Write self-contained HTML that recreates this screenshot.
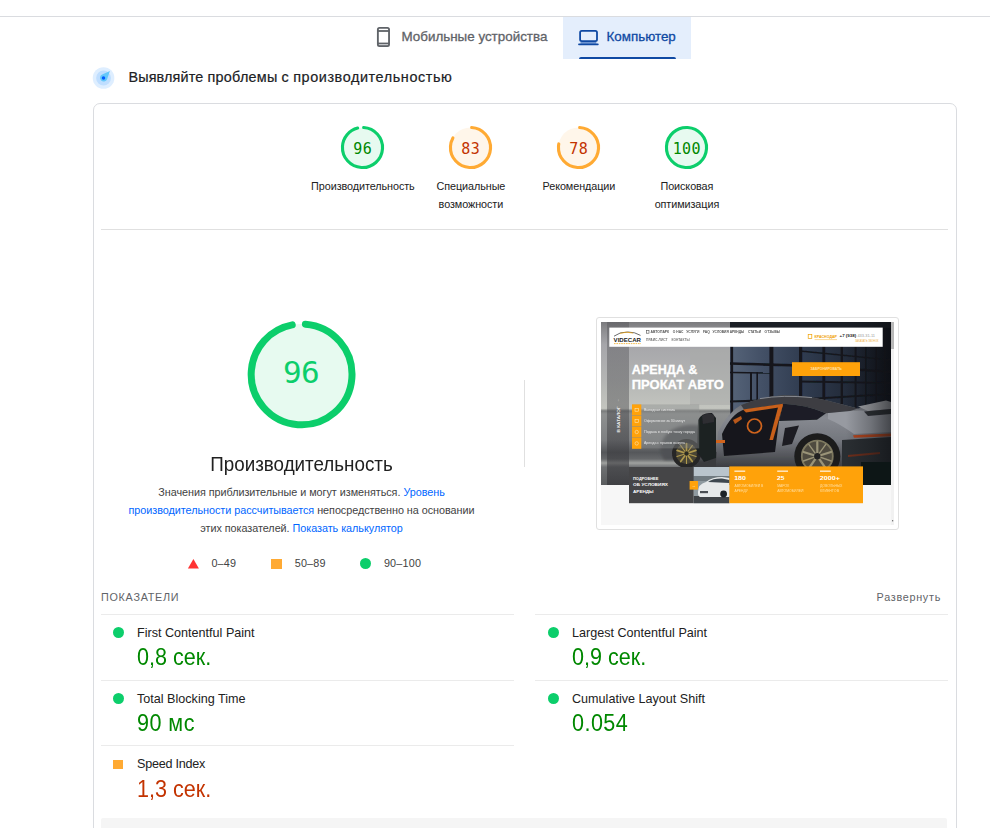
<!DOCTYPE html>
<html lang="ru">
<head>
<meta charset="utf-8">
<title>PageSpeed Insights</title>
<style>
html,body{margin:0;padding:0;}
body{width:990px;height:828px;overflow:hidden;background:#fff;position:relative;
  font-family:"Liberation Sans",Arial,sans-serif;color:#212121;}
.abs{position:absolute;white-space:nowrap;}
.topline{left:0;top:16px;width:990px;height:1px;background:#dadce0;}
.tab{font-size:13.4px;line-height:20px;-webkit-text-stroke:0.3px currentColor;}
.tab1{left:401.5px;top:27px;color:#5f6368;letter-spacing:0px;}
.tabbg{left:563px;top:17px;width:128px;height:42px;background:#e4eefc;}
.tabline{left:579px;top:56.6px;width:96.5px;height:2.4px;background:#0f49a3;border-radius:2.4px 2.4px 0 0;}
.tab2{left:606.5px;top:27px;color:#0f49a3;}
.h2{left:128.5px;word-spacing:-0.3px;top:67px;font-size:14.4px;line-height:20px;color:#202124;letter-spacing:0.31px;-webkit-text-stroke:0.2px currentColor;}
.card{left:93px;top:103px;width:862px;height:760px;border:1px solid #dadce0;border-radius:7px;}
.hr{height:1px;background:#e0e0e0;}
.mhr{height:1px;background:#ebebeb;}
.glabel{margin-left:0.4px;font-size:10.8px;line-height:18px;letter-spacing:-0.07px;color:#212121;text-align:center;width:108px;white-space:normal;}
.gnum{font-family:"DejaVu Sans Mono","Liberation Mono",monospace;letter-spacing:0.4px;font-size:15px;line-height:20px;text-align:center;width:44px;}
.title{left:151px;width:301px;top:451.6px;text-align:center;font-size:20px;line-height:24px;transform:scaleX(0.94);transform-origin:50% 50%;color:#212121;}
.desc{letter-spacing:-0.03px;left:121px;width:361px;top:483px;text-align:center;font-size:10.8px;line-height:18px;color:#424242;white-space:normal;}
.desc a{color:#0066ff;text-decoration:none;}
.legend{letter-spacing:0.2px;font-size:10.8px;line-height:14px;color:#424242;top:556px;}
.sect{font-size:10.8px;line-height:14px;color:#5f6368;top:590px;}
.mtitle{font-size:12.6px;line-height:16px;color:#212121;}
.mval{font-size:23.6px;line-height:26px;transform:scaleX(0.914);transform-origin:0 50%;}
.pass{color:#008800;}
.avg{color:#c33300;}
.dot{width:11.4px;height:11.4px;border-radius:50%;background:#0cce6b;}
.sq{width:10.6px;height:9px;background:#ffa400;}
.graybar{left:101px;top:818px;width:846px;height:20px;background:#f5f5f5;border-radius:2px 2px 0 0;}
</style>
</head>
<body>
<div class="abs topline"></div>

<!-- tabs -->
<svg class="abs" style="left:375px;top:26px" width="17" height="22" viewBox="0 0 17 22">
  <rect x="3" y="17.6" width="11" height="2.4" fill="#c4c6c9"/>
  <rect x="2.87" y="1.9" width="11.17" height="18.27" rx="1.6" ry="1.6" fill="none" stroke="#5f6368" stroke-width="1.85"/>
  <rect x="2.8" y="4.1" width="11.3" height="1.8" fill="#5f6368"/>
  <rect x="2.8" y="16.6" width="11.3" height="1.4" fill="#5f6368"/>
</svg>
<div class="abs tab tab1" id="tab1">Мобильные устройства</div>
<div class="abs tabbg"></div>
<div class="abs tabline"></div>
<svg class="abs" style="left:577px;top:29px" width="24" height="18" viewBox="0 0 24 18">
  <rect x="3.5" y="13" width="15.8" height="1.8" fill="#6d94d0"/>
  <rect x="3.1" y="1.8" width="16.9" height="10.3" rx="1.6" fill="none" stroke="#0f49a3" stroke-width="1.8"/>
  <rect x="1.1" y="14.6" width="20.6" height="1.6" rx="0.8" fill="#0f49a3"/>
</svg>
<div class="abs tab tab2" id="tab2">Компьютер</div>

<!-- heading -->
<svg class="abs" style="left:92px;top:66px" width="24" height="24" viewBox="0 0 24 24">
  <circle cx="11.55" cy="12" r="10.8" fill="#deeeff"/>
  <circle cx="11.55" cy="12" r="7.4" fill="#bfdeff"/>
  <path d="M17.9 5 L15.1 13.3 A3.7 3.7 0 1 1 10.2 8.4 Z" fill="#64c8fa"/>
  <circle cx="11.5" cy="11.9" r="1.75" fill="#005aff"/>
</svg>
<div class="abs h2" id="h2"><span style="letter-spacing:0.13px">Выявляйте</span> <span style="letter-spacing:0.27px">проблемы</span> с <span style="letter-spacing:0.6px">производительностью</span></div>

<div class="abs card"></div>

<!-- small gauges -->
<svg class="abs" style="left:338.0px;top:123px" width="49" height="49" viewBox="0 0 49 49">
  <circle cx="24.5" cy="24.5" r="20.05" fill="#e7faf0"/>
  <circle cx="24.5" cy="24.5" r="20.05" fill="none" stroke="#0cce6b" stroke-width="3.1" stroke-linecap="round" stroke-dasharray="119.08 200" transform="rotate(-86.7 24.5 24.5)"/>
</svg>
<div class="abs gnum" id="gn0" style="left:340.5px;top:139.3px;margin-left:0.3px;color:#008800">96</div>
<div class="abs glabel" id="gl0" style="left:308.5px;top:177px">Производительность</div>
<svg class="abs" style="left:446.0px;top:123px" width="49" height="49" viewBox="0 0 49 49">
  <circle cx="24.5" cy="24.5" r="20.05" fill="#fff6ea"/>
  <circle cx="24.5" cy="24.5" r="20.05" fill="none" stroke="#ffaa33" stroke-width="3.1" stroke-linecap="round" stroke-dasharray="102.71 200" transform="rotate(-86.7 24.5 24.5)"/>
</svg>
<div class="abs gnum" id="gn1" style="left:448.5px;top:139.3px;margin-left:0.3px;color:#c33300">83</div>
<div class="abs glabel" id="gl1" style="left:416.5px;top:177px">Специальные возможности</div>
<svg class="abs" style="left:554.0px;top:123px" width="49" height="49" viewBox="0 0 49 49">
  <circle cx="24.5" cy="24.5" r="20.05" fill="#fff6ea"/>
  <circle cx="24.5" cy="24.5" r="20.05" fill="none" stroke="#ffaa33" stroke-width="3.1" stroke-linecap="round" stroke-dasharray="96.41 200" transform="rotate(-86.7 24.5 24.5)"/>
</svg>
<div class="abs gnum" id="gn2" style="left:556.5px;top:139.3px;margin-left:0.3px;color:#c33300">78</div>
<div class="abs glabel" id="gl2" style="left:524.5px;top:177px">Рекомендации</div>
<svg class="abs" style="left:662.0px;top:123px" width="49" height="49" viewBox="0 0 49 49">
  <circle cx="24.5" cy="24.5" r="20.05" fill="#e7faf0"/>
  <circle cx="24.5" cy="24.5" r="20.05" fill="none" stroke="#0cce6b" stroke-width="3.1" stroke-linecap="round" stroke-dasharray="130.98 200" transform="rotate(-86.7 24.5 24.5)"/>
</svg>
<div class="abs gnum" id="gn3" style="left:664.5px;top:139.3px;margin-left:0.3px;color:#008800">100</div>
<div class="abs glabel" id="gl3" style="left:632.5px;top:177px">Поисковая оптимизация</div>

<div class="abs hr" style="left:101px;top:229px;width:847px"></div>

<!-- big gauge -->
<svg class="abs" style="left:241px;top:314px" width="122" height="122" viewBox="0 0 122 122">
  <circle cx="60.6" cy="60.4" r="50.4" fill="#e7faf0"/>
  <circle cx="60.6" cy="60.4" r="50.4" fill="none" stroke="#0cce6b" stroke-width="7" stroke-linecap="round" stroke-dasharray="302.9 400" transform="rotate(-85.7 60.6 60.4)"/>
</svg>
<div class="abs" id="bignum" style="left:251px;width:100px;top:352px;text-align:center;font-family:'DejaVu Sans Mono','Liberation Mono',monospace;font-size:31px;line-height:40px;color:#0cce6b;letter-spacing:-0.6px">96</div>

<div class="abs title" id="title">Производительность</div>
<div class="abs desc" id="desc">Значения приблизительные и могут изменяться. <a>Уровень производительности рассчитывается</a> непосредственно на основании этих показателей. <a>Показать калькулятор</a></div>

<!-- legend -->
<svg class="abs" style="left:187px;top:558px" width="13" height="12" viewBox="0 0 13 12"><path d="M6.4 1 L11.9 10.5 L0.9 10.5 Z" fill="#ff3333"/></svg>
<div class="abs legend" id="lg1" style="left:211.4px">0–49</div>
<div class="abs" style="left:271px;top:558.5px;width:10.8px;height:10px;background:#ffaa33"></div>
<div class="abs legend" id="lg2" style="left:294.7px">50–89</div>
<div class="abs" style="left:360px;top:558px;width:11px;height:11px;border-radius:50%;background:#0cce6b"></div>
<div class="abs legend" id="lg3" style="left:383.9px">90–100</div>

<!-- vertical divider -->
<div class="abs" style="left:524px;top:380px;width:1px;height:87px;background:#e0e0e0"></div>

<!-- screenshot placeholder -->
<div class="abs" id="shot" style="left:596px;top:317px;width:301px;height:211px;border:1px solid #e0e0e0;border-radius:3px;"></div>

<!-- SHOT-START -->
<svg class="abs" style="left:601px;top:322px" width="293" height="203" viewBox="601 322 293 203" font-family="'Liberation Sans',Arial,sans-serif">
  <defs>
    <linearGradient id="wall" x1="0" y1="0" x2="0" y2="1">
      <stop offset="0" stop-color="#7a7a7d"/>
      <stop offset="0.04" stop-color="#8a8a8d"/>
      <stop offset="0.14" stop-color="#a6a6aa"/>
      <stop offset="0.35" stop-color="#b4b5b4"/>
      <stop offset="0.53" stop-color="#c3c5bf"/>
      <stop offset="0.546" stop-color="#7a7c7c"/>
      <stop offset="0.564" stop-color="#8e9090"/>
      <stop offset="0.724" stop-color="#7e8082"/>
      <stop offset="0.80" stop-color="#55575a"/>
      <stop offset="0.84" stop-color="#66686a"/>
      <stop offset="0.865" stop-color="#a0a2a0"/>
      <stop offset="0.89" stop-color="#6e7072"/>
      <stop offset="1" stop-color="#5a5c5e"/>
    </linearGradient>
    <linearGradient id="bld" x1="0" y1="0" x2="1" y2="0">
      <stop offset="0" stop-color="#566479"/>
      <stop offset="0.2" stop-color="#435066"/>
      <stop offset="0.45" stop-color="#303c50"/>
      <stop offset="0.8" stop-color="#1f2633"/>
      <stop offset="1" stop-color="#10131a"/>
    </linearGradient>
    <linearGradient id="body" x1="0" y1="0" x2="0" y2="1">
      <stop offset="0" stop-color="#5b5d62"/>
      <stop offset="0.3" stop-color="#878a91"/>
      <stop offset="0.6" stop-color="#74777e"/>
      <stop offset="1" stop-color="#36373b"/>
    </linearGradient>
    <linearGradient id="side" x1="0" y1="0" x2="0" y2="1">
      <stop offset="0" stop-color="#4a4a4e" stop-opacity="0.36"/>
      <stop offset="0.5" stop-color="#444448" stop-opacity="0.42"/>
      <stop offset="1" stop-color="#303034" stop-opacity="0.62"/>
    </linearGradient>
    <linearGradient id="vig" x1="0" y1="0" x2="1" y2="0">
      <stop offset="0" stop-color="#0c0e12" stop-opacity="0"/>
      <stop offset="0.55" stop-color="#0c0e12" stop-opacity="0.28"/>
      <stop offset="1" stop-color="#0c0e12" stop-opacity="0.6"/>
    </linearGradient>
    <filter id="b1" x="-10%" y="-10%" width="120%" height="120%"><feGaussianBlur stdDeviation="0.7"/></filter>
    <filter id="b2" x="-20%" y="-20%" width="140%" height="140%"><feGaussianBlur stdDeviation="1.6"/></filter>
    <clipPath id="photo"><rect x="601" y="322" width="290" height="163"/></clipPath>
  </defs>
  <rect x="601" y="322" width="293" height="203" fill="#f7f7f7"/>
  <g clip-path="url(#photo)">
    <rect x="601" y="322" width="290" height="163" fill="url(#wall)"/>
    <!-- building -->
    <rect x="730" y="322" width="161" height="140" fill="url(#bld)"/>
    <g filter="url(#b1)">
      <g fill="#14181e">
        <rect x="730.5" y="322" width="2.6" height="100"/>
        <rect x="769.4" y="322" width="4" height="100"/>
        <rect x="750" y="372" width="2" height="40"/>
        <rect x="756.4" y="372" width="1.6" height="40"/>
        <rect x="799" y="322" width="3.2" height="100"/>
        <rect x="822.4" y="322" width="2.8" height="100"/>
        <rect x="840.6" y="322" width="2.4" height="100"/>
        <rect x="854.6" y="322" width="2" height="100"/>
        <rect x="865" y="322" width="1.8" height="100"/>
        <rect x="875.4" y="322" width="1.6" height="100"/>
        <rect x="884" y="322" width="1.4" height="100"/>
      </g>
      <g stroke="#14181e" fill="none">
        <path d="M730 363.5 L800 365.5 L891 372" stroke-width="2.6"/>
        <path d="M800 351 L891 360" stroke-width="1.6"/>
        <path d="M730 372.5 L770 373" stroke-width="1.4"/>
        <path d="M800 381.5 L891 383" stroke-width="2"/>
        <path d="M730 401.5 L800 399.5 L891 394" stroke-width="2.2"/>
      </g>
    </g>
    <rect x="730" y="322" width="161" height="6" fill="#1b1f26"/>
    <!-- floor -->
    <rect x="690" y="452" width="201" height="33" fill="#3a3b3e"/>
    <!-- pale pedestal / wall edge -->
    <rect x="690" y="349" width="40" height="56" fill="#a9abaa" opacity="0.55"/>
    <!-- car -->
    <g filter="url(#b1)">
      <!-- front fender blurred -->
      <path d="M660 452 Q661 431 682 426 Q700 422 706 430 L708 460 L664 460 Z" fill="#505154" filter="url(#b2)"/>
      <!-- main body -->
      <path d="M716 462 L718 432 Q728 412 741 405 Q760 397.5 783 395.3 Q802 395 826 400.2 L858 408.6 L884 402 L891 403 L891 470 L716 470 Z" fill="url(#body)"/>
      <!-- rear fender highlight -->
      <path d="M828 413 Q860 408 891 413 L891 432 L854 434 Q840 424 828 419 Z" fill="#979aa1"/>
      <!-- rear dark lower -->
      <path d="M842 440 L891 437 L891 470 L842 470 Z" fill="#2c2e33"/>
      <!-- rear wing -->
      <path d="M858 406.5 L886 400.5 L891 402 L891 409 L868 411 Z" fill="#a6a8ac"/>
      <path d="M864 411.4 L891 409 L891 414 L868 416 Z" fill="#2f3136"/>
      <!-- roof dark strip -->
      <path d="M741 405 Q760 397.5 783 395.3 Q802 395 826 400.2 L858 408.6 L850 411 L826 413.3 Q806 404.6 783 403.8 L744 409.4 Z" fill="#3c3e43"/>
      <path d="M760 398.6 Q783 394.6 812 397.6" fill="none" stroke="#8e9197" stroke-width="0.9"/>
      <!-- side window -->
      <path d="M783 403.8 Q806 404.6 826 413.3 L817 419.7 L779 421 Z" fill="#1b1f25"/>
      <!-- door opening interior -->
      <path d="M722 434 Q731 414 744 409.4 L783 403.8 L779 421 L775 452 L724 456 Z" fill="#17181b"/>
      <!-- orange accents -->
      <path d="M743 409.4 L783 403.8 L782 407 L746 412.6 Z" fill="#c8601a"/>
      <path d="M778.4 406 L783 405 L773 440 L769.4 440 Z" fill="#c8601a"/>
      <circle cx="754.5" cy="426" r="7" fill="none" stroke="#d0641c" stroke-width="1.7"/>
      <path d="M733 420 L741 416 L742 419 L735 424 Z" fill="#b9581a"/>
      <rect x="716" y="440" width="9" height="3" fill="#d0641c"/>
      <!-- air intake -->
      <path d="M785 428 L799 425.4 L792 444 L782 446 Z" fill="#1c1d20"/>
      <!-- taillight -->
      <path d="M853 435.2 L891 433.5 L891 436.2 L854 437.8 Z" fill="#b5441c"/>
      <path d="M848 455 L880 452 L880 454 L848 457 Z" fill="#6e2f1a"/>
      <!-- rear wheel -->
      <circle cx="817.3" cy="456.2" r="23" fill="#1a1b1e"/>
      <circle cx="817.3" cy="456.2" r="15.5" fill="#4f4c40"/>
      <circle cx="817.3" cy="456.2" r="15.5" fill="none" stroke="#7d785f" stroke-width="1.8"/>
      <g stroke="#9a9478" stroke-width="2.2" stroke-linecap="round">
        <path d="M817.3 456.2 L817.3 442"/><path d="M817.3 456.2 L803.5 452"/><path d="M817.3 456.2 L831 452"/><path d="M817.3 456.2 L808.8 468.5"/><path d="M817.3 456.2 L825.8 468.5"/>
        <path d="M817.3 456.2 L809 444.6" stroke-width="1.4"/><path d="M817.3 456.2 L825.6 444.6" stroke-width="1.4"/><path d="M817.3 456.2 L803.4 461" stroke-width="1.4"/><path d="M817.3 456.2 L831.2 461" stroke-width="1.4"/>
      </g>
      <circle cx="817.3" cy="456.2" r="3.2" fill="#242424"/>
      <!-- front wheel -->
      <circle cx="686.5" cy="453.5" r="14.5" fill="#262627"/>
      <circle cx="686.5" cy="453.5" r="10.5" fill="#4a4534"/>
      <g stroke="#b09a4e" stroke-width="1.7" stroke-linecap="round">
        <path d="M686.5 453.5 L686.5 443.6"/><path d="M686.5 453.5 L677.1 450.4"/><path d="M686.5 453.5 L695.9 450.4"/><path d="M686.5 453.5 L680.7 461.5"/><path d="M686.5 453.5 L692.3 461.5"/>
        <path d="M686.5 453.5 L680.6 445.4" stroke-width="1.1"/><path d="M686.5 453.5 L692.4 445.4" stroke-width="1.1"/><path d="M686.5 453.5 L676.9 456.6" stroke-width="1.1"/><path d="M686.5 453.5 L696.1 456.6" stroke-width="1.1"/><path d="M686.5 453.5 L686.5 463.4" stroke-width="1.1"/>
      </g>
      <circle cx="686.5" cy="453.5" r="2.2" fill="#2c2a22"/>
      <!-- open door -->
      <path d="M698 420 Q702 412 712 413 L716 418 L716 458 L704 462 L697 452 Z" fill="#1f2024"/>
      <path d="M702 416 Q708 412 714 415 L714 422 L703 424 Z" fill="#2d2e33"/>
    </g>
    <!-- left sidebar strip -->
    <rect x="607" y="322" width="22" height="163" fill="url(#side)"/>
    <!-- right dark vignette -->
    <rect x="846" y="322" width="45" height="163" fill="url(#vig)"/>
    <rect x="861" y="462" width="30" height="23" fill="#111215" filter="url(#b1)"/>
  </g>

  <!-- header bar -->
  <rect x="609.3" y="327.6" width="273.4" height="19.2" fill="#ffffff"/>
  <!-- logo -->
  <path d="M614 336.2 Q620 331.6 628 332 Q635 332 640.5 335.4" fill="none" stroke="#2b2b2b" stroke-width="0.7"/>
  <path d="M620 333.4 Q626 331.2 633 333" fill="none" stroke="#f0a000" stroke-width="0.7"/>
  <text x="613.6" y="341.6" font-size="5.1" font-weight="700" fill="#222" textLength="27.4" lengthAdjust="spacingAndGlyphs">VIDECAR</text>
  <path d="M614 343.6 H641" stroke="#f0a000" stroke-width="0.7" stroke-dasharray="1.6 0.8"/>
  <!-- nav -->
  <g fill="#333" font-size="3" font-weight="700" opacity="0.85">
    <rect x="646.4" y="330.6" width="2.6" height="2.6" fill="none" stroke="#333" stroke-width="0.6"/>
    <text x="650.6" y="333.2" textLength="18.6" lengthAdjust="spacingAndGlyphs">АВТОПАРК</text>
    <text x="672.8" y="333.2" textLength="10.6" lengthAdjust="spacingAndGlyphs">О НАС</text>
    <text x="686.2" y="333.2" textLength="13.4" lengthAdjust="spacingAndGlyphs">УСЛУГИ</text>
    <text x="703" y="333.2" textLength="6.8" lengthAdjust="spacingAndGlyphs">FAQ</text>
    <text x="712.6" y="333.2" textLength="31.6" lengthAdjust="spacingAndGlyphs">УСЛОВИЯ АРЕНДЫ</text>
    <text x="748" y="333.2" textLength="13" lengthAdjust="spacingAndGlyphs">СТАТЬИ</text>
    <text x="764.6" y="333.2" textLength="15.4" lengthAdjust="spacingAndGlyphs">ОТЗЫВЫ</text>
  </g>
  <g fill="#555" font-size="2.7" font-weight="700" opacity="0.8">
    <text x="646" y="340.6" textLength="21.6" lengthAdjust="spacingAndGlyphs">ПРАЙС-ЛИСТ</text>
    <text x="671.6" y="340.6" textLength="18" lengthAdjust="spacingAndGlyphs">КОНТАКТЫ</text>
  </g>
  <rect x="808.2" y="334.6" width="3.6" height="3.8" fill="none" stroke="#f0a000" stroke-width="0.7"/>
  <text x="814.6" y="338.4" font-size="3.3" font-weight="700" fill="#f0a000" textLength="22.4" lengthAdjust="spacingAndGlyphs">КРАСНОДАР</text>
  <path d="M814.6 339.6 H837" stroke="#f0a000" stroke-width="0.4"/>
  <text x="839.6" y="336.6" font-size="3.6" font-weight="700" fill="#222" textLength="16.6" lengthAdjust="spacingAndGlyphs">+7 (938)</text>
  <text x="857.4" y="336.6" font-size="3.6" fill="#999" textLength="17.6" lengthAdjust="spacingAndGlyphs">433-31-11</text>
  <text x="855" y="342" font-size="2.6" fill="#f0b040" textLength="23.6" lengthAdjust="spacingAndGlyphs">ЗАКАЗАТЬ ЗВОНОК</text>
  <!-- headline -->
  <g fill="#ffffff" font-size="12.2" font-weight="700" stroke="#ffffff" stroke-width="0.3">
    <text x="631.8" y="374.4" textLength="65.6" lengthAdjust="spacingAndGlyphs">АРЕНДА &amp;</text>
    <text x="631.8" y="388.8" textLength="92" lengthAdjust="spacingAndGlyphs">ПРОКАТ АВТО</text>
  </g>
  <!-- button -->
  <rect x="792" y="362.2" width="68" height="13.8" fill="#ffa20a"/>
  <text x="810.4" y="370.2" font-size="2.9" font-weight="700" fill="#ffe0a8" textLength="31.4" lengthAdjust="spacingAndGlyphs">ЗАБРОНИРОВАТЬ</text>
  <!-- side vertical label -->
  <text transform="translate(619.8 432.4) rotate(-90)" font-size="3.6" font-weight="700" fill="#eeeeee" textLength="26" lengthAdjust="spacingAndGlyphs">В КАТАЛОГ</text>
  <text transform="translate(619.4 402.4) rotate(-90)" font-size="3.4" fill="#dddddd">→</text>
  <!-- feature list -->
  <rect x="632" y="404.4" width="67.2" height="44" fill="#8b8d8d" opacity="0.42"/>
  <g fill="#ffa20a">
    <rect x="632" y="404.4" width="9.3" height="10.8"/>
    <rect x="632" y="415.6" width="9.3" height="10.8"/>
    <rect x="632" y="426.8" width="9.3" height="10.8"/>
    <rect x="632" y="438" width="9.3" height="10.8"/>
  </g>
  <g fill="none" stroke="#ffe3b0" stroke-width="0.6">
    <rect x="635" y="408.6" width="3.4" height="2.6"/>
    <rect x="635" y="419.6" width="3.4" height="3"/>
    <circle cx="636.7" cy="432" r="1.7"/>
    <circle cx="636.7" cy="443.4" r="1.7"/>
  </g>
  <g fill="#f2f2f2" font-size="2.9" opacity="0.9">
    <text x="644" y="410.6" textLength="31" lengthAdjust="spacingAndGlyphs">Выгодная система</text>
    <text x="644" y="421.8" textLength="41" lengthAdjust="spacingAndGlyphs">Оформление за 30 минут</text>
    <text x="644" y="432.8" textLength="51" lengthAdjust="spacingAndGlyphs">Подача в любую точку города</text>
    <text x="644" y="444" textLength="41" lengthAdjust="spacingAndGlyphs">Аренда с правом выкупа</text>
  </g>
  <!-- bottom boxes -->
  <rect x="629" y="467" width="64.8" height="36.2" fill="#454547"/>
  <g fill="#ffffff" font-size="3.7" font-weight="700">
    <text x="633" y="480" textLength="25.4" lengthAdjust="spacingAndGlyphs">ПОДРОБНЕЕ</text>
    <text x="633" y="486.3" textLength="35" lengthAdjust="spacingAndGlyphs">ОБ УСЛОВИЯХ</text>
    <text x="633" y="492.6" textLength="20.6" lengthAdjust="spacingAndGlyphs">АРЕНДЫ</text>
  </g>
  <!-- small car photo -->
  <g>
    <rect x="693.8" y="467" width="35.6" height="36.2" fill="#8f9aa0"/>
    <rect x="693.8" y="467" width="35.6" height="9" fill="#b9c4cc"/>
    <rect x="693.8" y="476" width="35.6" height="5" fill="#6f7a80" filter="url(#b1)"/>
    <rect x="693.8" y="496" width="35.6" height="7.2" fill="#3f4347"/>
    <path d="M698 492 Q698 484 706 482 Q712 477 722 477 L729.4 478 L729.4 497 L700 497 Q697.6 496 698 492 Z" fill="#e6e9ea" filter="url(#b1)"/>
    <path d="M708 482 Q713 478.4 722 478.6 L729.4 480 L729.4 483 Z" fill="#3d474f" filter="url(#b1)"/>
    <rect x="700" y="491" width="8" height="2.2" fill="#4a4f54"/>
    <circle cx="723.6" cy="494" r="3.4" fill="#1f2225" filter="url(#b1)"/>
  </g>
  <rect x="689.6" y="481" width="8.4" height="8.6" fill="#ffa20a"/>
  <text x="691.8" y="486.8" font-size="4" font-weight="700" fill="#ffe9c4">→</text>
  <!-- orange stats -->
  <rect x="729.4" y="466.4" width="133.6" height="36.8" fill="#ffa20a"/>
  <g fill="#ffffff">
    <rect x="734.4" y="470.6" width="10.8" height="1.1"/>
    <rect x="777.2" y="470.6" width="10.8" height="1.1"/>
    <rect x="820" y="470.6" width="10.8" height="1.1"/>
  </g>
  <g fill="#ffffff" font-size="5.9" font-weight="700">
    <text x="734.2" y="479.6" textLength="11.8" lengthAdjust="spacingAndGlyphs">180</text>
    <text x="777" y="479.6" textLength="7.4" lengthAdjust="spacingAndGlyphs">25</text>
    <text x="819.8" y="479.6" textLength="20" lengthAdjust="spacingAndGlyphs">2000+</text>
  </g>
  <g fill="#ffe0a6" font-size="3" opacity="0.95">
    <text x="734.4" y="486.7" textLength="29" lengthAdjust="spacingAndGlyphs">АВТОМОБИЛЕЙ В</text>
    <text x="734.4" y="491.5" textLength="13.6" lengthAdjust="spacingAndGlyphs">АРЕНДУ</text>
    <text x="777.2" y="486.7" textLength="12" lengthAdjust="spacingAndGlyphs">МАРОК</text>
    <text x="777.2" y="491.5" textLength="26.4" lengthAdjust="spacingAndGlyphs">АВТОМОБИЛЕЙ</text>
    <text x="820" y="486.7" textLength="22.4" lengthAdjust="spacingAndGlyphs">ДОВОЛЬНЫХ</text>
    <text x="820" y="491.5" textLength="19" lengthAdjust="spacingAndGlyphs">КЛИЕНТОВ</text>
  </g>
  <!-- scrollbar strip -->
  <rect x="891" y="322" width="3" height="203" fill="#f1f1f1"/>
  <rect x="891" y="322" width="3" height="27" fill="#b9b9b9"/>
  <rect x="892" y="520" width="1.2" height="1.4" fill="#777"/>
</svg>
<!-- SHOT-END -->

<!-- metrics -->
<div class="abs sect" id="sect1" style="left:101px;letter-spacing:0.72px">ПОКАЗАТЕЛИ</div>
<div class="abs sect" id="sect2" style="right:49px;letter-spacing:0.72px">Развернуть</div>

<div class="abs mhr" style="left:101px;top:614px;width:413px"></div>
<div class="abs mhr" style="left:535px;top:614px;width:413px"></div>
<div class="abs mhr" style="left:101px;top:680px;width:413px"></div>
<div class="abs mhr" style="left:535px;top:680px;width:413px"></div>
<div class="abs mhr" style="left:101px;top:745px;width:413px"></div>

<div class="abs dot" style="left:112.7px;top:626.8px"></div>
<div class="abs mtitle" id="m1t" style="left:137px;top:624.9px">First Contentful Paint</div>
<div class="abs mval pass" id="m1v" style="left:137px;top:644px">0,8 сек.</div>

<div class="abs dot" style="left:547.6px;top:626.8px"></div>
<div class="abs mtitle" id="m2t" style="left:572px;top:624.9px">Largest Contentful Paint</div>
<div class="abs mval pass" id="m2v" style="left:572px;top:644px">0,9 сек.</div>

<div class="abs dot" style="left:112.7px;top:692.8px"></div>
<div class="abs mtitle" id="m3t" style="left:137px;top:690.9px">Total Blocking Time</div>
<div class="abs mval pass" id="m3v" style="letter-spacing:0.5px;left:137px;top:710px">90 мс</div>

<div class="abs dot" style="left:547.6px;top:692.8px"></div>
<div class="abs mtitle" id="m4t" style="left:572px;top:690.9px">Cumulative Layout Shift</div>
<div class="abs mval pass" id="m4v" style="letter-spacing:0.5px;left:572px;top:710px">0.054</div>

<div class="abs sq" style="left:112.8px;top:760.2px;background:#ffaa33"></div>
<div class="abs mtitle" id="m5t" style="letter-spacing:-0.25px;left:137px;top:755.9px">Speed Index</div>
<div class="abs mval avg" id="m5v" style="left:137px;top:775.5px">1,3 сек.</div>

<div class="abs graybar"></div>
</body>
</html>
